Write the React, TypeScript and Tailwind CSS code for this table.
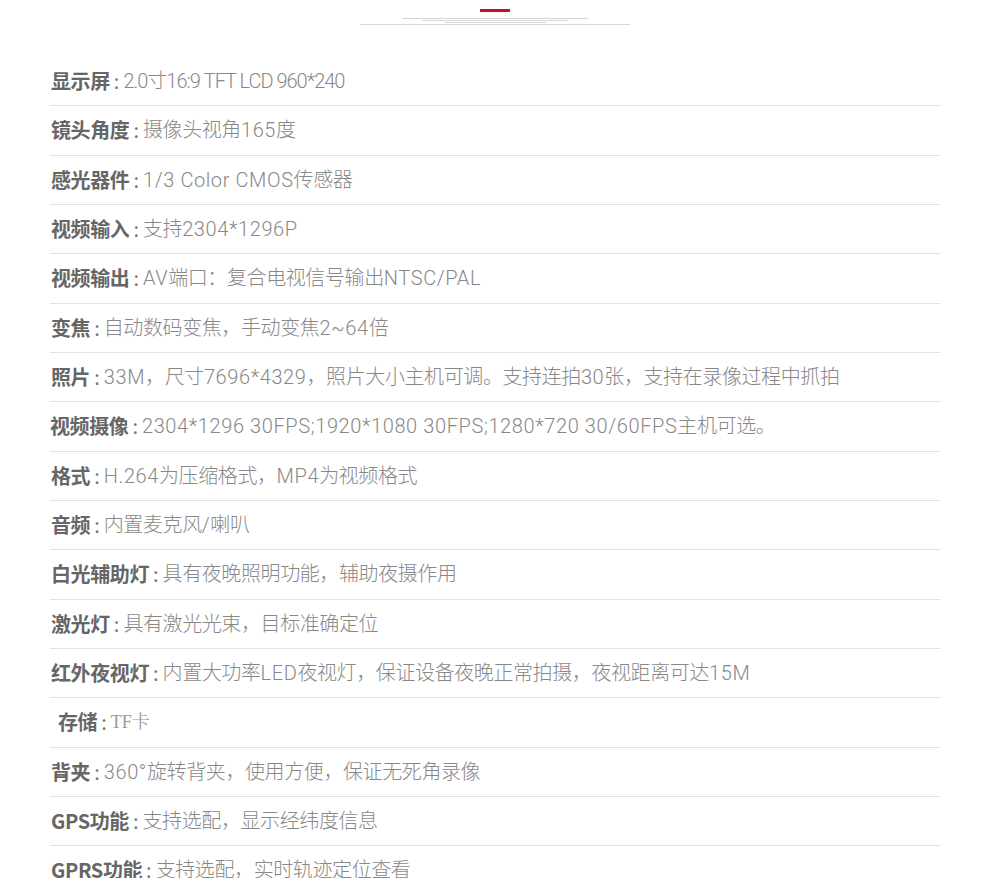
const specs = [
  { label: "显示屏", value: "2.0寸16:9 TFT LCD 960*240", tight: true },
  { label: "镜头角度", value: "摄像头视角165度" },
  { label: "感光器件", value: "1/3 Color CMOS传感器" },
  { label: "视频输入", value: "支持2304*1296P" },
  { label: "视频输出", value: "AV端口：复合电视信号输出NTSC/PAL" },
  { label: "变焦", value: "自动数码变焦，手动变焦2~64倍" },
  { label: "照片", value: "33M，尺寸7696*4329，照片大小主机可调。支持连拍30张，支持在录像过程中抓拍" },
  { label: "视频摄像", value: "2304*1296 30FPS;1920*1080 30FPS;1280*720 30/60FPS主机可选。", shift: true },
  { label: "格式", value: "H.264为压缩格式，MP4为视频格式" },
  { label: "音频", value: "内置麦克风/喇叭" },
  { label: "白光辅助灯", value: "具有夜晚照明功能，辅助夜摄作用" },
  { label: "激光灯", value: "具有激光光束，目标准确定位" },
  { label: "红外夜视灯", value: "内置大功率LED夜视灯，保证设备夜晚正常拍摄，夜视距离可达15M" },
  { label: "存储", value: "TF卡", serif: true },
  { label: "背夹", value: "360°旋转背夹，使用方便，保证无死角录像" },
  { label: "GPS功能", value: "支持选配，显示经纬度信息" },
  { label: "GPRS功能", value: "支持选配，实时轨迹定位查看" },
];

const cjk = /([\u3000-\u9fff\uff00-\uffef]+)/;

// latin runs are a bit wider in the original, cjk runs a bit tighter
function Value({ text }: { text: string }) {
  return (
    <>
      {text
        .split(cjk)
        .filter(Boolean)
        .map((part, i) => (
          <span key={i} className={cjk.test(part) ? "tracking-[-0.02em]" : "tracking-[0.03em]"}>
            {part}
          </span>
        ))}
    </>
  );
}

function Divider() {
  return (
    <div className="flex flex-col items-center pt-[9px]">
      <div className="w-[30px] h-[3px] bg-[#c3102b]" />
      <div className="w-[186px] h-px bg-[#d6d6d6] mt-[6px]" />
      <div className="w-[146px] h-px bg-[#d6d6d6] mt-px" />
      <div className="w-[101px] h-px bg-[#d6d6d6] mt-px" />
      <div className="w-[270px] h-px bg-[#d6d6d6] mt-px" />
    </div>
  );
}

export default function App() {
  return (
    <div
      className="w-[990px] h-[878px] overflow-hidden bg-white"
      style={{ fontFamily: '"Noto Sans CJK SC", "Noto Sans", sans-serif' }}
    >
      <Divider />
      <div className="ml-[50px] w-[891px] mt-[32px]">
        {specs.map((s, i) => (
          <div
            key={i}
            className={`h-[49.33px] border-b border-[#e2e2e2] flex items-center text-[20px] leading-none whitespace-nowrap ${
              s.serif ? "pl-[8px]" : s.shift ? "pl-0" : "pl-px"
            }`}
          >
            <span className="font-bold text-[#666] tracking-[-0.02em]">{s.label}</span>
            <span className="text-[#777] ml-[4px] mr-[4px]">:</span>
            {s.serif ? (
              <span
                className="text-[18px] text-[#999]"
                style={{ fontFamily: '"Liberation Serif", "Noto Serif CJK SC", "Noto Sans CJK SC", serif' }}
              >
                {s.value}
              </span>
            ) : (
              <span
                className={`font-light text-[#888] ${s.tight ? "tracking-[-0.05em]" : ""}`}
                style={{ fontFamily: 'Roboto, "Noto Sans CJK SC", sans-serif' }}
              >
                {s.tight ? s.value : <Value text={s.value} />}
              </span>
            )}
          </div>
        ))}
      </div>
    </div>
  );
}
